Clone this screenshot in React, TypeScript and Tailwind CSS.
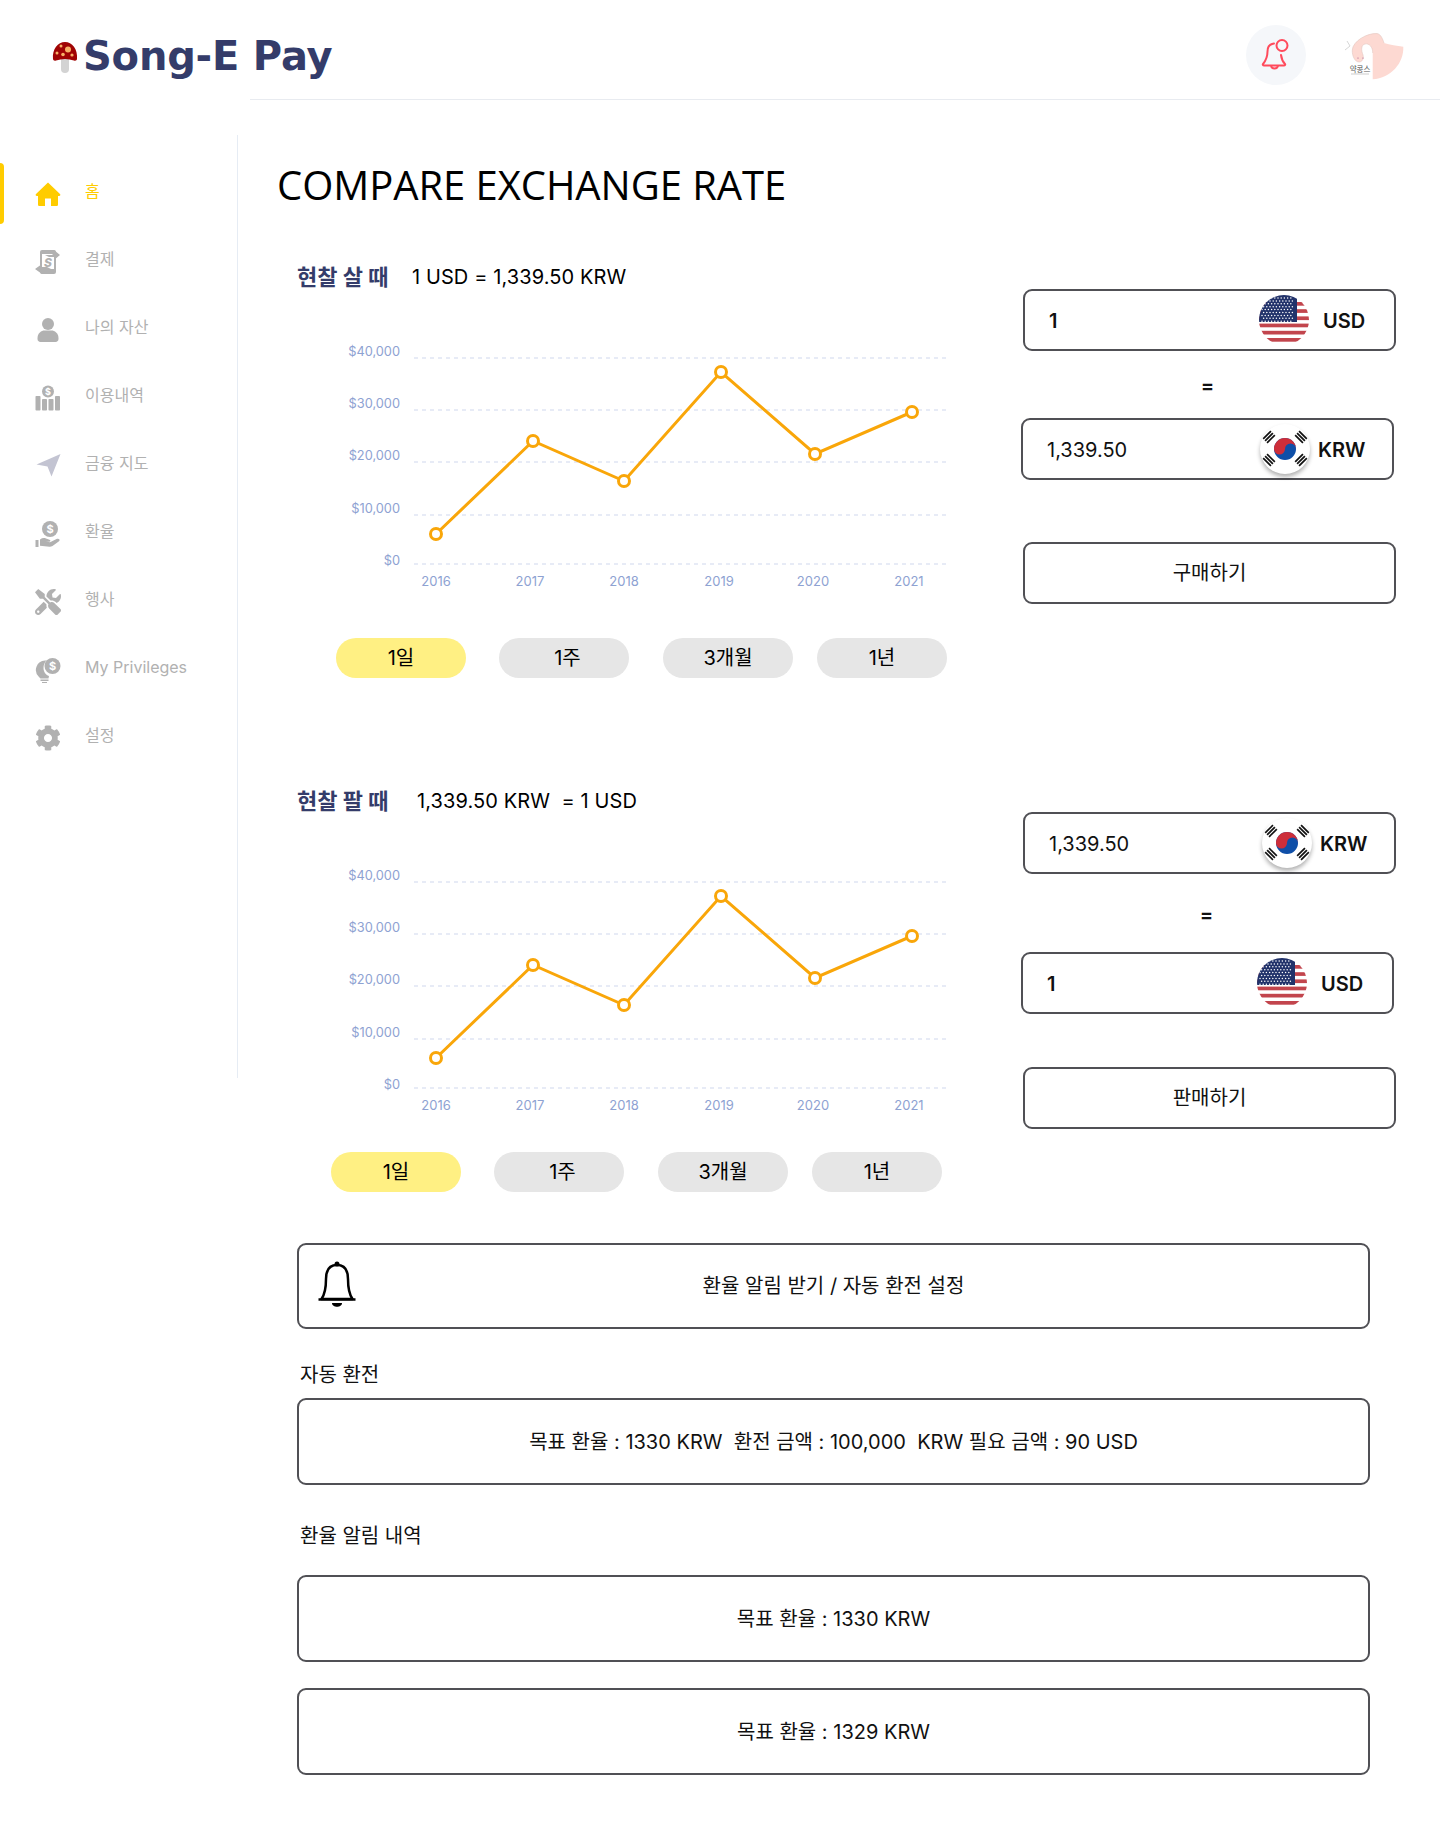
import React from "react";
import { FaCog, FaTools } from "react-icons/fa";

const fontStack = "font-['Inter','Noto_Sans_CJK_KR',sans-serif]";

const points = [
	[139, 194],
	[236, 101],
	[327, 141],
	[424, 32],
	[518, 114],
	[615, 72],
];
const yLabels = [
	{ label: "$40,000", y: 16 },
	{ label: "$30,000", y: 68 },
	{ label: "$20,000", y: 120 },
	{ label: "$10,000", y: 173 },
	{ label: "$0", y: 225 },
];
const gridYs = [18, 70, 122, 175, 224];
const xLabels = [
	{ label: "2016", x: 139 },
	{ label: "2017", x: 233 },
	{ label: "2018", x: 327 },
	{ label: "2019", x: 422 },
	{ label: "2020", x: 516 },
	{ label: "2021", x: 612 },
];

const Chart = () => (
	<svg width="650" height="255" viewBox="0 0 650 255" className="block">
		{gridYs.map((y) => (
			<line key={y} x1="117" x2="650" y1={y} y2={y} stroke="#dfe5f4" strokeWidth="1.5" strokeDasharray="4 4" />
		))}
		{yLabels.map((l) => (
			<text key={l.label} x="103" y={l.y} textAnchor="end" fontFamily="Inter" fontSize="12.8" fill="#8ea2d2">
				{l.label}
			</text>
		))}
		{xLabels.map((l) => (
			<text key={l.label} x={l.x} y="246" textAnchor="middle" fontFamily="Inter" fontSize="13" fill="#8ea2d2">
				{l.label}
			</text>
		))}
		<polyline points={points.map((p) => p.join(",")).join(" ")} fill="none" stroke="#f9a609" strokeWidth="3" />
		{points.map((p) => (
			<circle key={p[0]} cx={p[0]} cy={p[1]} r="5.5" fill="#fff" stroke="#f9a609" strokeWidth="3" />
		))}
	</svg>
);

const Pill = ({ label, active, className }: { label: string; active?: boolean; className?: string }) => (
	<div
		className={`w-[130px] h-10 rounded-full flex items-center justify-center text-[20px] text-black ${
			active ? "bg-[#fff083]" : "bg-[#e6e6e6]"
		} ${className ?? ""}`}
	>
		{label}
	</div>
);

const UsFlag = () => {
	const stripes = [0, 1, 2, 3, 4, 5, 6];
	const stars: number[][] = [];
	for (let r = 0; r < 9; r++) {
		for (let c = 0; c < 10; c++) {
			stars.push([3 + c * 3.2 + (r % 2 ? 1.6 : 0), 3 + r * 2.9]);
		}
	}
	return (
		<svg width="50" height="50" viewBox="0 0 50 50" className="shrink-0">
			<defs>
				<clipPath id="us-clip">
					<circle cx="25" cy="25" r="25" />
				</clipPath>
			</defs>
			<g clipPath="url(#us-clip)">
				<rect width="50" height="50" fill="#fff" />
				{stripes.map((i) => (
					<rect key={i} x="0" y={7 + i * 7.2} width="50" height="3.7" fill="#c2454d" />
				))}
				<rect width="38" height="27" fill="#22336b" />
				{stars.map((s, i) => (
					<circle key={i} cx={s[0]} cy={s[1]} r="0.75" fill="#fff" />
				))}
			</g>
		</svg>
	);
};

const Trigram = ({ x, y, rotate }: { x: number; y: number; rotate: number }) => (
	<g transform={`translate(${x} ${y}) rotate(${rotate})`}>
		<rect x="-5.5" y="-3.6" width="11" height="1.7" fill="#111" />
		<rect x="-5.5" y="-0.85" width="11" height="1.7" fill="#111" />
		<rect x="-5.5" y="1.9" width="11" height="1.7" fill="#111" />
	</g>
);

const KrFlag = () => (
	<svg
		width="50"
		height="50"
		viewBox="0 0 50 50"
		className="shrink-0 rounded-full bg-white shadow-[0_3px_4px_rgba(0,0,0,0.3)]"
	>
		<circle cx="25" cy="25" r="11" fill="#0f4fa8" />
		<path d="M14 25a11 11 0 0 1 22 0a5.500 5.500 0 0 0-11 0a5.500 5.500 0 0 1-11 0z" fill="#cd2e3a" />
		<Trigram x={9} y={13} rotate={-45} />
		<Trigram x={41} y={13} rotate={45} />
		<Trigram x={9} y={36} rotate={45} />
		<Trigram x={41} y={36} rotate={-45} />
	</svg>
);

const CurrencyBox = ({
	value,
	unit,
	className,
}: {
	value: string;
	unit: "USD" | "KRW";
	className?: string;
}) => (
	<div
		className={`w-[373px] h-[62px] flex items-center border-2 border-[#505055] rounded-[9px] ${className ?? ""}`}
	>
		<span className={`ml-6 pt-[1px] text-[20px] text-[#111] ${unit === "USD" ? "font-semibold" : ""}`}>{value}</span>
		<div className={`ml-auto flex items-center ${unit === "USD" ? "w-[135px]" : "w-[132px]"}`}>
			{unit === "USD" ? <UsFlag /> : <KrFlag />}
			<span
				className={`pt-[1px] text-[20px] font-semibold text-[#111] ${unit === "USD" ? "ml-[14px]" : "ml-[8px]"}`}
			>
				{unit}
			</span>
		</div>
	</div>
);

const BigButton = ({ label, className }: { label: string; className?: string }) => (
	<div
		className={`w-[373px] h-[62px] flex items-center justify-center border-2 border-[#505055] rounded-[9px] text-[20px] text-[#111] ${
			className ?? ""
		}`}
	>
		{label}
	</div>
);

const Wide = ({ children, className }: { children: React.ReactNode; className?: string }) => (
	<div
		className={`w-[1073px] h-[87px] flex items-center justify-center border-2 border-[#505055] rounded-[9px] text-[20px] text-[#111] whitespace-pre ${
			className ?? ""
		}`}
	>
		{children}
	</div>
);

const HomeIcon = () => (
	<svg width="26" height="26" viewBox="0 0 26 26">
		<path
			d="M13 1.500 25 13c.8.9.3 2-.9 2H23v8.500c0 1-.7 1.500-1.500 1.500H16v-7.500h-6V25H4.500C3.700 25 3 24.500 3 23.500V15H1.900c-1.200 0-1.700-1.100-.9-2Z"
			fill="#ffcc00"
		/>
	</svg>
);

const PayIcon = () => (
	<svg width="26" height="26" viewBox="0 0 26 26" fill="#b1b1b1">
		<rect x="5" y="1" width="16" height="24" rx="2" />
		<rect x="7" y="5" width="12" height="15" fill="#fff" />
		<path d="M10 6h7l2 -2v-3l6 5-6 5v-3h-5z" />
		<path d="M16 20H9l-2 2v3l-7-5 7-5v3h5z" />
		<text x="13" y="17.500" textAnchor="middle" fontFamily="Inter" fontSize="12" fontWeight="800" fontStyle="italic" fill="#b1b1b1">
			S
		</text>
	</svg>
);

const UserIcon = () => (
	<svg width="26" height="26" viewBox="0 0 26 26" fill="#b1b1b1">
		<circle cx="13" cy="7" r="6" />
		<path d="M2.500 21c0-5 4-7.500 7-7.500h7c3 0 7 2.500 7 7.500v1c0 1.600-1.200 3-3 3h-15c-1.800 0-3-1.400-3-3z" />
	</svg>
);

const BarsIcon = () => (
	<svg width="26" height="26" viewBox="0 0 26 26" fill="#b1b1b1">
		<circle cx="13" cy="6.500" r="6" />
		<text x="13" y="10" textAnchor="middle" fontFamily="Inter" fontSize="9" fontWeight="700" fill="#fff">
			$
		</text>
		<rect x="0.500" y="11" width="5" height="14.500" rx="0.800" />
		<rect x="7" y="14" width="5" height="11.500" rx="0.800" />
		<rect x="13.500" y="14" width="5" height="11.500" rx="0.800" />
		<rect x="20" y="11" width="5" height="14.500" rx="0.800" />
	</svg>
);

const SendIcon = () => (
	<svg width="26" height="26" viewBox="0 0 26 26">
		<path d="M25.500 1 16.500 23.500 12.500 13.500 1.500 11.500Z" fill="#c3c4d2" />
	</svg>
);

const HandIcon = () => (
	<svg width="26" height="26" viewBox="0 0 26 26" fill="#b1b1b1">
		<circle cx="15" cy="8" r="8" />
		<text x="15" y="12" textAnchor="middle" fontFamily="Inter" fontSize="11" fontWeight="700" fill="#fff">
			$
		</text>
		<rect x="0.500" y="19" width="3" height="7" />
		<path d="M5 18.500c2-1.500 4-1.800 6-1l3.500 1.200c1.500.5 1 2.300-.5 2.100l-3-.3 4 .8 6.500-3.300c2.500-1 4 .8 2.500 2.200l-6.500 4.800c-1 .6-2 .9-3 .8l-9.500-1z" />
	</svg>
);

const BulbIcon = () => (
	<svg width="26" height="26" viewBox="0 0 26 26" fill="#b1b1b1">
		<path d="M10 3.500a9.500 9.500 0 0 0-6 16.500l1.500 1.500h8L14 19c-3-1-5.500-4-5.500-8 0-3 1-5.500 3-7.500z" />
		<rect x="5.500" y="22.500" width="8" height="1.500" />
		<rect x="7" y="25" width="5" height="1" />
		<circle cx="17.500" cy="9" r="8" />
		<text x="17.500" y="13" textAnchor="middle" fontFamily="Inter" fontSize="11" fontWeight="700" fill="#fff">
			$
		</text>
	</svg>
);

const navItems = [
	{ label: "홈", icon: <HomeIcon />, active: true },
	{ label: "결제", icon: <PayIcon /> },
	{ label: "나의 자산", icon: <UserIcon /> },
	{ label: "이용내역", icon: <BarsIcon /> },
	{ label: "금융 지도", icon: <SendIcon /> },
	{ label: "환율", icon: <HandIcon /> },
	{ label: "행사", icon: <FaTools size={26} color="#b1b1b1" /> },
	{ label: "My Privileges", icon: <BulbIcon /> },
	{ label: "설정", icon: <FaCog size={26} color="#b1b1b1" /> },
];

const Mushroom = () => (
	<svg width="26" height="32" viewBox="0 0 26 32">
		<rect x="9" y="15" width="8" height="17" rx="4" fill="#d3d3d3" />
		<path d="M1 18C0 8 6 1 13 1s13 7 12 17c-.2 1.500-1.500 2-3 1.500-3-1-6-1.500-9-1.500s-6 .5-9 1.500C2.500 20 1.200 19.500 1 18Z" fill="#a00404" />
		<circle cx="16" cy="8.500" r="3" fill="#f7b267" />
		<circle cx="9" cy="5" r="1.500" fill="#f7b267" />
		<circle cx="5" cy="12" r="1.500" fill="#f7b267" />
		<circle cx="11" cy="13.500" r="1.800" fill="#f7b267" />
		<circle cx="20" cy="14" r="1.600" fill="#f7b267" />
	</svg>
);

const BellAlert = () => (
	<svg width="30" height="34" viewBox="0 0 30 34" fill="none" stroke="#ff4b5c" strokeWidth="2">
		<path d="M13 5.500c-4.500 .5-6.500 4-6.500 8 0 5-.8 8-4.500 12.500-.5.800 0 1.500 1 1.500h20c1 0 1.500-.7 1-1.500-2.500-2.500-3.500-5.500-4-9" strokeLinecap="round" />
		<path d="M10 27.500c.5 4 6.500 4 7 0" />
		<circle cx="21" cy="7.500" r="5.500" />
	</svg>
);

const Avatar = () => (
	<svg width="62" height="50" viewBox="0 0 62 50">
		<path
			d="M9.300 17C10 8 24 0 34 .5 38 1 40 7 41 10c6 2 13 3 19.300 3.700C61 30 48 45 29.700 46.300V20c.3-6-3.700-10-7.700-9-4 1-4 6-2 11 1 4-1 7-4 7-4 0-7-6-6.700-12Z"
			fill="#fdd9d2"
		/>
		<path
			d="M9.300 17C10 8 24 0 34 .5 38 1 40 7 41 10M29.700 20c.3-6-3.700-10-7.700-9-4 1-4 6-2 11 1 4-1 7-4 7-4 0-7-6-6.700-12"
			fill="none"
			stroke="#e3c6c0"
			strokeWidth="0.600"
		/>
		<circle cx="15" cy="25" r="0.600" fill="#a58" />
		<circle cx="20" cy="25" r="0.600" fill="#a58" />
		<path d="M4 8l3 5-5 4" fill="none" stroke="#cccccc" strokeWidth="0.800" />
		<text x="17" y="39" textAnchor="middle" fontFamily="Noto Sans CJK KR" fontSize="7.500" fill="#555">
			약콩스
		</text>
		<line x1="8" x2="26" y1="41" y2="41" stroke="#999" strokeWidth="0.500" />
	</svg>
);

const NavBell = () => (
	<svg width="38" height="46" viewBox="0 0 38 46" fill="none" stroke="#000" strokeWidth="2.500">
		<path d="M19 4c-8 0-11 6-11 14 0 8-1 15-4.500 20h31C31 33 30 26 30 18c0-8-3-14-11-14Z" strokeLinejoin="round" />
		<path d="M0.500 38.500h37" />
		<path d="M14 42h10c0 5-10 5-10 0Z" fill="#000" stroke="none" />
		<circle cx="19" cy="3" r="2.500" fill="#000" stroke="none" />
	</svg>
);

export default function App() {
	return (
		<div className={`w-[1440px] h-[1839px] bg-white overflow-hidden ${fontStack}`}>
			<header className="h-[100px] flex">
				<div className="w-[250px] h-[100px] shrink-0 flex items-start">
					<div className="ml-[52px] mt-[41px]">
						<Mushroom />
					</div>
					<span className="ml-[5px] mt-[29px] whitespace-nowrap font-['DejaVu_Sans',sans-serif] font-bold text-[40px] leading-[54px] tracking-[-0.200px] text-[#343c6a]">
						Song-E Pay
					</span>
				</div>
				<div className="flex-1 border-b border-[#e8ebf0] flex items-start">
					<div className="ml-[996px] mt-[25px] w-[60px] h-[60px] rounded-full bg-[#f5f7fa] flex items-center justify-center">
						<BellAlert />
					</div>
					<div className="ml-[37px] mt-[33px]">
						<Avatar />
					</div>
				</div>
			</header>

			<div className="flex items-start">
				<aside className="w-[238px] h-[943px] mt-[35px] shrink-0 border-r border-[#e6ecf4] pt-[22px]">
					{navItems.map((item) => (
						<div key={item.label} className="h-[68px] flex items-center relative">
							{item.active && <div className="w-1 h-[61px] rounded-r-md bg-[#ffcc00] absolute left-0 top-[6px]" />}
							<div className="ml-[35px] mt-[5px] w-[26px] h-[26px] flex items-center justify-center">{item.icon}</div>
							<span className={`ml-[24px] text-[16px] ${item.active ? "text-[#ffcc00]" : "text-[#b1b1b1]"}`}>
								{item.label}
							</span>
						</div>
					))}
				</aside>

				<main className="flex-1 pt-[58px]">
					<h1 className="ml-[39px] font-['Open_Sans',sans-serif] text-[40px] leading-[54px] tracking-[-0.050px] text-black whitespace-nowrap">
						COMPARE EXCHANGE RATE
					</h1>

					<section className="ml-[59px] mt-[51px] h-[523px] flex">
						<div className="w-[650px]">
							<div className="h-7 flex items-center text-[20px]">
								<span className="font-bold text-[22px] text-[#343c6a] w-[115px]">현찰 살 때</span>
								<span className="text-black tracking-[0.100px]">1 USD = 1,339.50 KRW</span>
							</div>
							<div className="mt-[49px]">
								<Chart />
							</div>
							<div className="mt-[43px] ml-[39px] flex">
								<Pill label="1일" active />
								<Pill label="1주" className="ml-[33px] pl-[7px]" />
								<Pill label="3개월" className="ml-[34px]" />
								<Pill label="1년" className="ml-[24px]" />
							</div>
						</div>
						<div className="ml-[76px] pt-[26px]">
							<CurrencyBox value="1" unit="USD" />
							<div className="w-[369px] h-[67px] pt-[2px] flex items-center justify-center text-[20px] font-semibold text-[#111]">=</div>
							<CurrencyBox value="1,339.50" unit="KRW" className="-ml-[2px]" />
							<BigButton label="구매하기" className="mt-[62px]" />
						</div>
					</section>

					<section className="ml-[59px] flex">
						<div className="w-[650px]">
							<div className="h-7 pt-[2px] flex items-center text-[20px]">
								<span className="font-bold text-[22px] text-[#343c6a] w-[120px]">현찰 팔 때</span>
								<span className="text-black whitespace-pre tracking-[0.100px]">1,339.50 KRW  = 1 USD</span>
							</div>
							<div className="mt-[50px]">
								<Chart />
							</div>
							<div className="mt-[33px] ml-[34px] flex">
								<Pill label="1일" active />
								<Pill label="1주" className="ml-[33px] pl-[7px]" />
								<Pill label="3개월" className="ml-[34px]" />
								<Pill label="1년" className="ml-[24px]" />
							</div>
						</div>
						<div className="ml-[76px] pt-[26px]">
							<CurrencyBox value="1,339.50" unit="KRW" />
							<div className="w-[367px] h-[78px] pt-1 flex items-center justify-center text-[20px] font-semibold text-[#111]">=</div>
							<CurrencyBox value="1" unit="USD" className="-ml-[2px]" />
							<BigButton label="판매하기" className="mt-[53px]" />
						</div>
					</section>

					<div className="ml-[59px] mt-[51px]">
						<div className="w-[1073px] h-[86px] grid grid-cols-[1fr_auto_1fr] items-center border-2 border-[#505055] rounded-[9px] text-[20px] text-[#111]">
							<div className="pl-[19px] pb-[4px]">
								<NavBell />
							</div>
							<span>환율 알림 받기 / 자동 환전 설정</span>
						</div>

						<div className="mt-[32px] ml-[3px] h-7 flex items-center text-[20px] text-[#111]">자동 환전</div>
						<Wide className="mt-[9px]">목표 환율 : 1330 KRW  환전 금액 : 100,000  KRW 필요 금액 : 90 USD</Wide>

						<div className="mt-[37px] ml-[3px] h-7 flex items-center text-[20px] text-[#111]">환율 알림 내역</div>
						<Wide className="mt-[25px]">목표 환율 : 1330 KRW</Wide>
						<Wide className="mt-[26px]">목표 환율 : 1329 KRW</Wide>
					</div>
				</main>
			</div>
		</div>
	);
}
